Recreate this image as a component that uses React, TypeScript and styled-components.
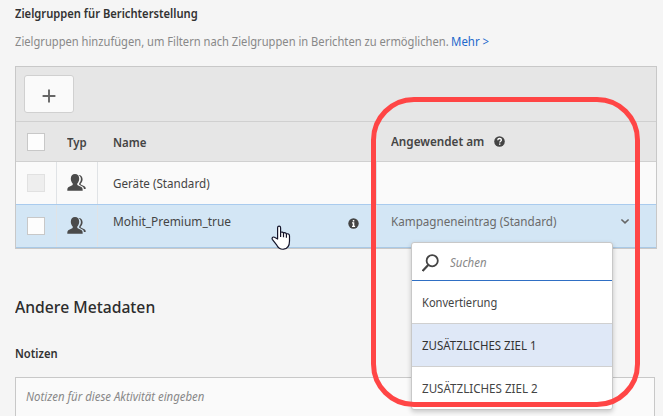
import React from 'react';
import styled, { createGlobalStyle, css } from 'styled-components';

const GlobalStyle = createGlobalStyle`
  * { box-sizing: border-box; }
  html, body { margin: 0; height: 416px; overflow: hidden; background: #f5f5f5; }
  body { font: 13px/16px "Noto Sans", sans-serif; color: #4b4b4b; }
`;

const Page = styled.main`
  position: relative;
  width: 663px;
  height: 416px;
  padding: 5px 0 0 15px;
  overflow: hidden;
`;

/* Condensed label: $w is the room it takes, $s the horizontal squeeze. */
const Label = styled.span<{ $w: number; $s: number; $tone?: string; $bold?: boolean; $italic?: boolean }>`
  display: block;
  flex: none;
  width: ${p => p.$w}px;
  white-space: nowrap;
  transform: scaleX(${p => p.$s});
  transform-origin: 0 50%;
  color: ${p => p.$tone ?? '#444'};
  ${p => p.$bold && css`font-weight: 600;`}
  ${p => p.$italic && css`font-style: italic;`}
`;

const Intro = styled.p`
  display: flex;
  gap: 3px;
  margin: 12px 0 17px;
`;

const Table = styled.section`
  width: 642px;
  height: 183px;
  border: 1px solid #c8c8c8;
  background: #fafafa;
`;

const Toolbar = styled.div`
  height: 55px;
  padding: 8px 0 0 8px;
  background: #e6e6e6;
  border-bottom: 1px solid #d0d0d0;
`;

const AddButton = styled.button`
  display: flex;
  align-items: center;
  justify-content: center;
  width: 50px;
  height: 38px;
  padding: 3px 0 0;
  border: 1px solid #d0d0d0;
  border-radius: 3px;
  background: #fafafa;
`;

const Row = styled.div<{ $kind: 'head' | 'plain' | 'active' }>`
  display: grid;
  grid-template-columns: 41px 41px 279px 1fr;
  height: ${p => (p.$kind === 'head' ? 40 : 43)}px;
  background: ${p => ({ head: '#e6e6e6', plain: '#fafafa', active: '#d3e6f5' })[p.$kind]};
  border-bottom: 1px solid ${p => ({ head: '#d0d0d0', plain: '#a9cbee', active: '#a9c9e6' })[p.$kind]};
`;

const Cell = styled.div<{ $line?: boolean; $top: number; $left?: number }>`
  display: flex;
  align-items: flex-start;
  padding: ${p => p.$top}px 0 0 ${p => p.$left ?? 0}px;
  border-right: 1px solid ${p => (p.$line ? '#e0e3e6' : 'transparent')};
`;

const Checkbox = styled.span<{ $off?: boolean }>`
  width: 18px;
  height: 18px;
  border: 1px solid ${p => (p.$off ? '#e1e1e1' : '#c8c8c8')};
  background: ${p => (p.$off ? '#eeeeee' : '#fdfdfd')};
`;

const Icon = styled.svg<{ $ml?: number; $mt?: number }>`
  display: block;
  flex: none;
  margin-left: ${p => p.$ml ?? 0}px;
  margin-top: ${p => p.$mt ?? 0}px;
`;

const Heading = styled.h2`
  margin: 48px 0 28px;
  font-size: 17px;
  font-weight: 500;
  line-height: 20px;
`;

const Notes = styled.div`
  width: 640px;
  height: 60px;
  margin-top: 16px;
  padding: 10px;
  border: 1px solid #c8c8c8;
  background: #fafafa;
`;

const Menu = styled.div`
  position: absolute;
  left: 411px;
  top: 242px;
  width: 202px;
  height: 168px;
  border: 1px solid #c8c8c8;
  border-radius: 3px;
  background: #fff;
  box-shadow: 0 2px 5px rgba(0, 0, 0, 0.2);
`;

const SearchRow = styled.div`
  display: flex;
  height: 38px;
  padding: 11px 0 0 10px;
  border-bottom: 1px solid #2f6fc4;
`;

const Option = styled.div<{ $on?: boolean }>`
  height: 43px;
  padding: 13px 0 0 10px;
  background: ${p => (p.$on ? '#dfe8f7' : 'transparent')};
  border-bottom: 1px solid #d0d0d0;
  &:last-child { border-bottom: 0; }
`;

const Highlight = styled.div`
  position: absolute;
  left: 371px;
  top: 97px;
  width: 269px;
  height: 310px;
  border: 5px solid #ff4545;
  border-radius: 43px;
`;

const Pointer = styled.svg`
  position: absolute;
  left: 271px;
  top: 225px;
`;

function PeopleIcon() {
  return (
    <Icon width="19" height="17" viewBox="0 0 19 17" $ml={10} fill="#4b4b4b">
      <path d="M11.300.9c2.800-.1 4.300 1.900 4.300 4.400 0 1.900-.8 3.300-1.900 4.300v.8l3.700 1.800c1 .5 1.300 1.100 1.300 2.800h-1.800c-.1-1.500-.7-2.200-1.900-2.800l-2.800-1.400V9.300c1.100-1.200 1.700-2.500 1.700-4.300 0-1.700-.9-3.200-2.600-4.100z" />
      <path d="M8 .1c2.600 0 4.200 1.800 4.200 4.600 0 1.800-.7 3.600-1.900 4.700v1.700l4 2c1.100.6 1.400 1.300 1.400 3.600H.3c0-2.300.3-3 1.400-3.600l4-2V9.400C4.500 8.300 3.800 6.500 3.800 4.700 3.800 1.900 5.400.1 8 .1z" />
    </Icon>
  );
}

export default function App() {
  return (
    <>
      <GlobalStyle />
      <Page>
        <Label $w={182} $s={0.86} $tone="#323232" $bold>Zielgruppen für Berichterstellung</Label>
        <Intro>
          <Label $w={433} $s={0.858} $tone="#888">Zielgruppen hinzufügen, um Filtern nach Zielgruppen in Berichten zu ermöglichen.</Label>
          <Label $w={38} $s={0.88} $tone="#2268cc">Mehr &gt;</Label>
        </Intro>
        <Table>
          <Toolbar>
            <AddButton aria-label="+">
              <Icon width="14" height="14" viewBox="0 0 14 14"><path d="M7 .6v12.800M.6 7h12.800" stroke="#666" strokeWidth="1.900" /></Icon>
            </AddButton>
          </Toolbar>
          <Row $kind="head">
            <Cell $top={11} $left={11}><Checkbox /></Cell>
            <Cell $top={12} $left={10}><Label $w={21} $s={0.88} $bold>Typ</Label></Cell>
            <Cell $top={12} $left={15}><Label $w={34} $s={0.88} $bold>Name</Label></Cell>
            <Cell $top={11} $left={14}>
              <Label $w={93} $s={0.9} $bold>Angewendet am</Label>
              <Icon width="11" height="11" viewBox="0 0 11 11" $ml={10} $mt={3}>
                <circle cx="5.500" cy="5.500" r="5.300" fill="#444" />
                <path d="M3.700 4.200C3.800 2.800 4.700 2.500 5.600 2.500c1 0 1.800.500 1.800 1.500 0 1.300-1.700 1.200-1.700 2.600" fill="none" stroke="#fff" strokeWidth="1.300" />
                <path d="M5 7.400h1.400v1.400H5z" fill="#fff" />
              </Icon>
            </Cell>
          </Row>
          <Row $kind="plain">
            <Cell $top={12} $left={11} $line><Checkbox $off /></Cell>
            <Cell $top={12} $line><PeopleIcon /></Cell>
            <Cell $top={13} $left={15} $line><Label $w={97} $s={0.895}>Geräte (Standard)</Label></Cell>
            <Cell $top={13} />
          </Row>
          <Row $kind="active">
            <Cell $top={12} $left={11} $line><Checkbox /></Cell>
            <Cell $top={12} $line><PeopleIcon /></Cell>
            <Cell $top={8} $left={15} $line>
              <Label $w={118} $s={0.917}>Mohit_Premium_true</Label>
              <Icon width="11" height="11" viewBox="0 0 11 11" $ml={117} $mt={5}>
                <circle cx="5.500" cy="5.500" r="5.200" fill="#444" />
                <path d="M4.800 2h1.500v1.500H4.800zM4 4.300h2.300v3.500h.8V9H4V7.800h.8V5.400H4z" fill="#fff" />
              </Icon>
            </Cell>
            <Cell $top={8} $left={14}>
              <Label $w={165} $s={0.896} $tone="#6a6a6a">Kampagneneintrag (Standard)</Label>
              <Icon width="10" height="7" viewBox="0 0 10 7" $ml={64} $mt={5}>
                <path d="M1.400 1.500 5 4.800l3.600-3.300" fill="none" stroke="#666" strokeWidth="1.600" />
              </Icon>
            </Cell>
          </Row>
        </Table>
        <Heading><Label $w={140} $s={0.923} $tone="#2c2c2c">Andere Metadaten</Label></Heading>
        <Label $w={42} $s={0.86} $tone="#323232" $bold>Notizen</Label>
        <Notes><Label $w={178} $s={0.876} $tone="#888" $italic>Notizen für diese Aktivität eingeben</Label></Notes>

        <Menu>
          <SearchRow>
            <Icon width="28" height="18" viewBox="0 0 28 18" fill="none" stroke="#444">
              <circle cx="10.200" cy="6.700" r="5.600" strokeWidth="1.800" />
              <path d="M6.200 11 .6 16.900" strokeWidth="2.200" />
            </Icon>
            <Label $w={36} $s={0.88} $tone="#888" $italic>Suchen</Label>
          </SearchRow>
          <Option><Label $w={75} $s={0.855}>Konvertierung</Label></Option>
          <Option $on><Label $w={115} $s={0.883} $tone="#323232">ZUSÄTZLICHES ZIEL 1</Label></Option>
          <Option><Label $w={117} $s={0.892}>ZUSÄTZLICHES ZIEL 2</Label></Option>
        </Menu>
        <Highlight />
        <Pointer width="22" height="26" viewBox="0 0 22 26">
          <path d="M6.600 14V2.700c0-2 3-2 3 0v4.700c1-.7 2.600-.4 2.900.6 1-.6 2.600-.2 2.900.9 1.500-.5 3.100.3 3.100 2v5c0 4.500-2.400 7.800-6 8.300-3.600.3-5.400-1.500-6.700-4L1.300 14.300c-.8-1.900 1.300-2.900 2.700-1.800z" fill="#fff" stroke="#14142a" strokeWidth="1.200" strokeLinejoin="round" />
          <path d="M9.600 7.400v4.600M12.500 8v4.300M15.400 9v3.800" stroke="#14142a" strokeWidth="1.200" />
        </Pointer>
      </Page>
    </>
  );
}
